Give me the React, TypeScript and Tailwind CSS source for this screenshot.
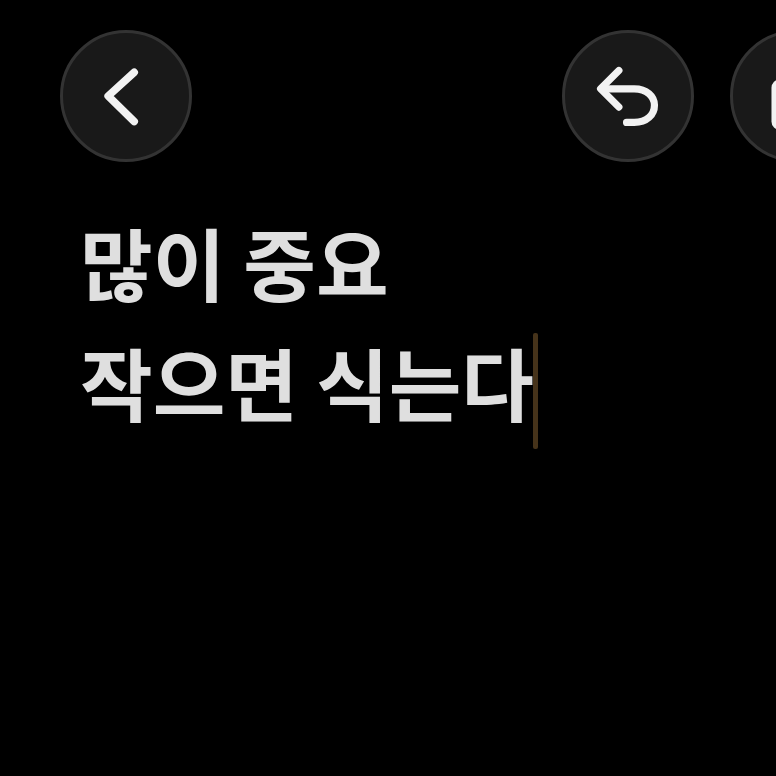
export default function App() {
  const btn = "flex h-[132px] w-[132px] shrink-0 items-center justify-center rounded-full border-[3px] border-[#333333] bg-[#191919]";
  return (
    <div className="h-[776px] w-[776px] overflow-hidden bg-black">
      <div className="flex items-start pl-[60px] pt-[30px]">
        <div className={btn}>
          <svg width="132" height="132" viewBox="0 0 131 131" fill="none" stroke="#f2f2f2" strokeWidth="8" strokeLinecap="round" strokeLinejoin="round">
            <path d="M74 41 L47 65.5 L74 92" />
          </svg>
        </div>
        <div className="ml-[370px] flex shrink-0 gap-[36px]">
          <div className={btn}>
            <svg width="132" height="132" viewBox="0 0 131 131" fill="none" stroke="#f2f2f2" strokeWidth="7.5" strokeLinecap="round" strokeLinejoin="round">
              <path d="M56 39 L37 58 L56 77" />
              <path d="M38 58 H72 C85 58 93 66 93 75 C93 85 85 93 72 93 H64" />
            </svg>
          </div>
          <div className={btn}>
            <svg width="132" height="132" viewBox="0 0 131 131" fill="none">
              <rect x="40" y="48" width="49" height="53" rx="9" fill="#f2f2f2" />
            </svg>
          </div>
        </div>
      </div>
      <div className="pl-[80px] pt-[40px] text-[79px] font-bold leading-[120px] text-[#dfdfdf] [font-family:'Noto_Sans_CJK_KR',sans-serif]">
        <div>많이 중요</div>
        <div className="relative w-fit">
          작으면 식는다
          <span className="absolute right-[-4px] top-[11px] h-[116px] w-[5px] rounded-[2px] bg-[#46331a]" />
        </div>
      </div>
    </div>
  );
}
